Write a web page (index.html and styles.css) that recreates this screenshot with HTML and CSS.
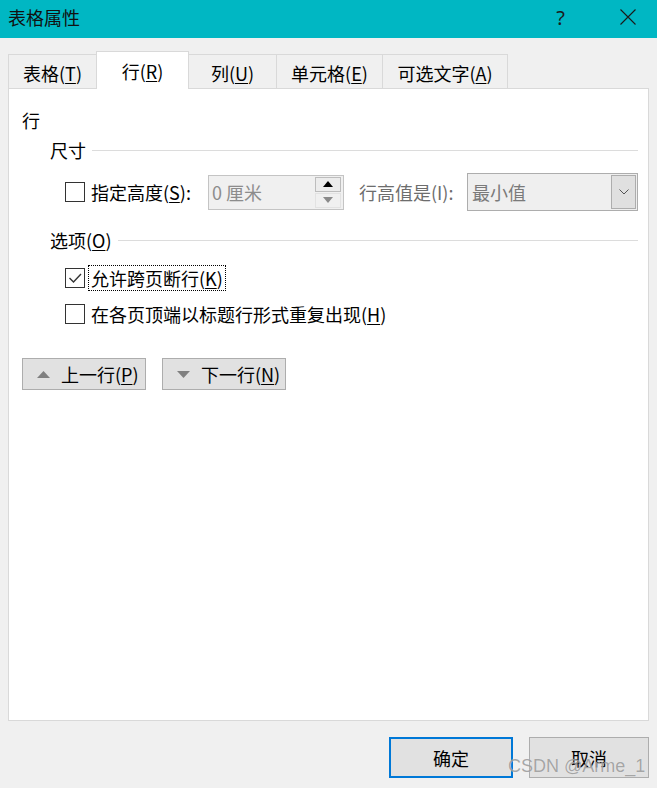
FILE: index.html
```html
<!DOCTYPE html>
<html lang="zh-CN">
<head>
<meta charset="utf-8">
<title>表格属性</title>
<link rel="stylesheet" href="styles.css">
</head>
<body>
<div class="dialog">
  <div class="titlebar">
    <span class="title">表格属性</span>
    <span class="help">?</span>
    <span class="close">
      <svg width="16" height="16" viewBox="0 0 16 16"><path d="M0.5 0.5 L15.5 15.5 M15.5 0.5 L0.5 15.5" stroke="#1a1a1a" stroke-width="1.1" fill="none"/></svg>
    </span>
  </div>

  <div class="tabs">
    <div class="tab t1">表格(<u>T</u>)</div>
    <div class="tab t2 active">行(<u>R</u>)</div>
    <div class="tab t3">列(<u>U</u>)</div>
    <div class="tab t4">单元格(<u>E</u>)</div>
    <div class="tab t5">可选文字(<u>A</u>)</div>
  </div>

  <div class="panel">
    <div class="caption">行</div>

    <div class="section">
      <span class="section-title">尺寸</span>
      <span class="rule"></span>
    </div>

    <div class="row size-row">
      <span class="checkbox"></span>
      <span class="label fixed-a">指定高度(<u>S</u>):</span>
      <div class="spinner">
        <span class="spin-value">0 厘米</span>
        <div class="spin-buttons">
          <span class="spin up"><svg width="10" height="6" viewBox="0 0 10 6"><path d="M0 6 L5 0 L10 6 Z" fill="#000"/></svg></span>
          <span class="spin down"><svg width="10" height="6" viewBox="0 0 10 6"><path d="M0 0 L5 6 L10 0 Z" fill="#8a8a8a"/></svg></span>
        </div>
      </div>
      <span class="label disabled fixed-b">行高值是(I):</span>
      <div class="select">
        <span class="select-value">最小值</span>
        <span class="select-arrow"><svg width="10" height="6" viewBox="0 0 10 6"><path d="M0.5 0.5 L5 5 L9.5 0.5" stroke="#555" stroke-width="1" fill="none"/></svg></span>
      </div>
    </div>

    <div class="section options">
      <span class="section-title">选项(<u>O</u>)</span>
      <span class="rule"></span>
    </div>

    <div class="row check-row first">
      <span class="checkbox">
        <svg width="18" height="18" viewBox="0 0 18 18"><path d="M3.5 9 L7.5 13 L15 5" stroke="#333" stroke-width="1.4" fill="none"/></svg>
      </span>
      <span class="label focused">允许跨页断行(<u>K</u>)</span>
    </div>

    <div class="row check-row second">
      <span class="checkbox"></span>
      <span class="label">在各页顶端以标题行形式重复出现(<u>H</u>)</span>
    </div>

    <div class="nav-buttons">
      <div class="btn nav">
        <svg width="13" height="7" viewBox="0 0 13 7"><path d="M0 7 L6.5 0 L13 7 Z" fill="#808080"/></svg>
        <span>上一行(<u>P</u>)</span>
      </div>
      <div class="btn nav">
        <svg width="13" height="7" viewBox="0 0 13 7"><path d="M0 0 L6.5 7 L13 0 Z" fill="#808080"/></svg>
        <span>下一行(<u>N</u>)</span>
      </div>
    </div>
  </div>

  <div class="footer">
    <div class="btn ok">确定</div>
    <div class="btn cancel">取消</div>
  </div>

  <div class="watermark">CSDN @Arme_1</div>
</div>
</body>
</html>
```

FILE: styles.css
```css
html, body {
  margin: 0;
  padding: 0;
}

body {
  width: 657px;
  height: 788px;
  background: #f0f0f0;
  font-family: "Noto Sans CJK SC", "Noto Sans", sans-serif;
  font-size: 18px;
  line-height: 24px;
  color: #000;
  overflow: hidden;
}

u {
  text-decoration: underline;
  text-underline-offset: 2px;
  text-decoration-thickness: 1px;
}

.dialog {
  position: relative;
  width: 657px;
  height: 788px;
}

/* Title bar */
.titlebar {
  height: 38px;
  background: #00b7c3;
  display: flex;
  align-items: center;
  padding-left: 8px;
  box-sizing: border-box;
}

.title {
  flex: 1;
  font-size: 18px;
  line-height: 24px;
  margin-top: -4px;
  color: #111;
}

.help {
  font-family: "Noto Sans", sans-serif;
  font-size: 20px;
  color: #1a1a1a;
  margin-right: 55px;
  margin-top: -3px;
}

.close {
  display: flex;
  margin-right: 21px;
  margin-top: -5px;
}

/* Tabs */
.tabs {
  display: flex;
  align-items: flex-end;
  height: 35px;
  margin-top: 15px;
  padding-left: 8px;
}

.tab {
  height: 34px;
  box-sizing: border-box;
  border: 1px solid #d9d9d9;
  border-bottom: none;
  margin-left: -1px;
  background: #f0f0f0;
  display: flex;
  align-items: center;
  justify-content: center;
  padding-top: 2px;
}

.tab.t1 { width: 89px; margin-left: 0; }
.tab.t2 { width: 93px; }
.tab.t3 { width: 89px; }
.tab.t4 { width: 107px; }
.tab.t5 { width: 126px; }

.tab.active {
  height: 38px;
  margin-bottom: -1px;
  background: #fff;
  position: relative;
  z-index: 1;
  padding-top: 0;
}

/* Panel */
.panel {
  margin: 0 8px;
  height: 633px;
  box-sizing: border-box;
  background: #fff;
  border: 1px solid #d9d9d9;
  padding: 19px 10px 0 13px;
  display: flex;
  flex-direction: column;
}

.caption {
  height: 24px;
}

.section {
  display: flex;
  align-items: center;
  height: 24px;
  margin-top: 6px;
  margin-left: 28px;
}

.section.options {
  margin-top: 17px;
}

.rule {
  flex: 1;
  height: 1px;
  background: #dcdcdc;
  margin-left: 6px;
}

.row {
  display: flex;
  align-items: center;
  margin-left: 43px;
}

.size-row {
  height: 38px;
  margin-top: 11px;
}

.check-row {
  height: 26px;
}

.check-row.first { margin-top: 13px; }
.check-row.second { margin-top: 10px; }

.checkbox {
  width: 20px;
  height: 20px;
  box-sizing: border-box;
  border: 1px solid #333;
  background: #fff;
  display: flex;
  align-items: center;
  justify-content: center;
  flex: none;
}

.label {
  margin-left: 6px;
  white-space: nowrap;
}

.label.focused {
  margin-left: 3px;
  padding: 0 2px;
  border: 1px dotted #000;
  line-height: 24px;
}

.label.disabled {
  color: #6d6d6d;
}

.fixed-a { width: 117px; flex: none; }
.fixed-b { width: 108px; flex: none; margin-left: 15px; }

/* Spinner */
.spinner {
  width: 136px;
  height: 35px;
  box-sizing: border-box;
  border: 1px solid #c4c4c4;
  background: #f0f0f0;
  display: flex;
  align-items: center;
  justify-content: space-between;
  padding-left: 3px;
  padding-right: 2px;
  flex: none;
}

.spin-value {
  color: #8c8c8c;
}

.spin-buttons {
  display: flex;
  flex-direction: column;
  width: 26px;
  gap: 1px;
}

.spin {
  height: 15px;
  box-sizing: border-box;
  display: flex;
  align-items: center;
  justify-content: center;
}

.spin.up {
  border: 1px solid #bdbdbd;
  background: #ececec;
}

.spin.down {
  border: 1px solid #e2e2e2;
  background: #f0f0f0;
}

/* Select */
.select {
  margin-left: 0;
  width: 171px;
  height: 38px;
  box-sizing: border-box;
  border: 1px solid #adadad;
  background: #efefef;
  display: flex;
  align-items: center;
  justify-content: space-between;
  padding-left: 4px;
  padding-right: 1px;
  flex: none;
}

.select-value {
  color: #7a7a7a;
}

.select-arrow {
  width: 25px;
  height: 34px;
  box-sizing: border-box;
  border: 1px solid #adadad;
  background: #e0e0e0;
  display: flex;
  align-items: center;
  justify-content: center;
}

/* Buttons */
.btn {
  box-sizing: border-box;
  background: #e1e1e1;
  border: 1px solid #adadad;
  display: flex;
  align-items: center;
}

.nav-buttons {
  display: flex;
  gap: 16px;
  margin-top: 31px;
}

.btn.nav {
  width: 124px;
  height: 32px;
  padding-left: 14px;
  gap: 11px;
}

.footer {
  display: flex;
  justify-content: flex-end;
  gap: 16px;
  padding-right: 8px;
  margin-top: 16px;
}

.btn.ok {
  width: 124px;
  height: 41px;
  border: 2px solid #0078d7;
  justify-content: center;
}

.btn.cancel {
  width: 120px;
  height: 41px;
  justify-content: center;
}

/* Watermark overlay */
.watermark {
  position: absolute;
  left: 508px;
  top: 755px;
  font-family: "Liberation Sans", Arial, sans-serif;
  font-size: 18px;
  line-height: 22px;
  color: rgba(140, 140, 140, 0.75);
  text-shadow: 0 0 1px rgba(255, 255, 255, 0.6);
  white-space: nowrap;
}
```
